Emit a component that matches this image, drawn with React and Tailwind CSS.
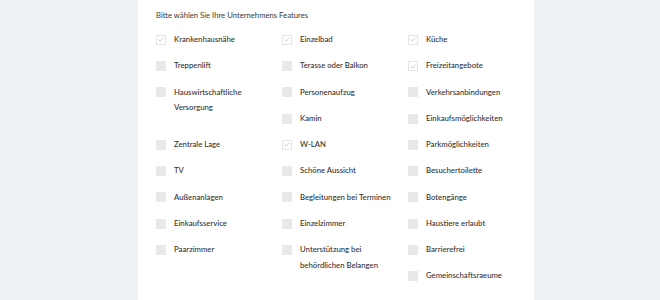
import React from "react";

const items = [
  { t: "Krankenhausnähe", c: true },
  { t: "Einzelbad", c: true },
  { t: "Küche", c: true },
  { t: "Treppenlift" },
  { t: "Terasse oder Balkon" },
  { t: "Freizeitangebote", c: true },
  { t: "Hauswirtschaftliche Versorgung", tall: true },
  { t: "Personenaufzug" },
  { t: "Verkehrsanbindungen" },
  { t: "Kamin" },
  { t: "Einkaufsmöglichkeiten" },
  { t: "Zentrale Lage" },
  { t: "W-LAN", c: true },
  { t: "Parkmöglichkeiten" },
  { t: "TV" },
  { t: "Schöne Aussicht" },
  { t: "Besuchertoilette" },
  { t: "Außenanlagen" },
  { t: "Begleitungen bei Terminen" },
  { t: "Botengänge" },
  { t: "Einkaufsservice" },
  { t: "Einzelzimmer" },
  { t: "Haustiere erlaubt" },
  { t: "Paarzimmer" },
  { t: "Unterstützung bei behördlichen Belangen", tall: true },
  { t: "Barrierefrei" },
  { t: "Gemeinschaftsraeume", last: true },
];

function Box({ checked }) {
  if (checked) {
    return (
      <span className="mt-[2.75px] flex h-[10px] w-[10px] shrink-0 items-center justify-center border border-[#e4e4e4] bg-white">
        <svg width="6" height="5" viewBox="0 0 6 5" fill="none">
          <path d="M0.6 2.6 L2.3 4.1 L5.4 0.8" stroke="#c9c9c9" strokeWidth="0.9" />
        </svg>
      </span>
    );
  }
  return <span className="mt-[2.75px] block h-[10px] w-[10px] shrink-0 bg-[#e8e8e8]" />;
}

export default function App() {
  return (
    <div
      className="flex h-[300px] w-[660px] bg-[#eef2f5]"
      style={{ fontFamily: "Lato, 'Noto Sans', sans-serif" }}
    >
      <div className="ml-[138px] h-full w-[396px] bg-white pl-[18px] pt-[7px]">
        <div className="text-[7.7px] leading-[16px] text-[#3a3a3a]">
          Bitte wählen Sie Ihre Unternehmens Features
        </div>
        <div className="mt-[9px] grid grid-cols-[126px_126px_126px] auto-rows-[26.25px]">
          {items.map((it) => (
            <div
              key={it.t}
              className={
                "flex items-start gap-[8px] " +
                (it.tall ? "row-span-2 " : "") +
                (it.last ? "col-start-3 " : "")
              }
            >
              <Box checked={it.c} />
              <span className="w-[96px] text-[7.75px] font-medium leading-[15.5px] text-[#333333]">
                {it.t}
              </span>
            </div>
          ))}
        </div>
      </div>
    </div>
  );
}
